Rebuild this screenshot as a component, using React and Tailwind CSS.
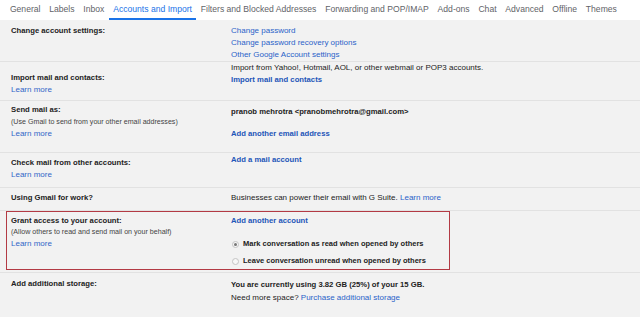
import React from 'react';

const tabs = [
  'General',
  'Labels',
  'Inbox',
  'Accounts and Import',
  'Filters and Blocked Addresses',
  'Forwarding and POP/IMAP',
  'Add-ons',
  'Chat',
  'Advanced',
  'Offline',
  'Themes',
];

const Label = ({ children }) => (
  <div className="text-[7.7px] leading-[12px] font-bold text-[#222]">{children}</div>
);

const Sub = ({ children }) => (
  <div className="text-[7.1px] leading-[11px] text-[#444]">{children}</div>
);

const LearnMore = () => (
  <div className="text-[8px] leading-[12px] text-[#3367c8]">Learn more</div>
);

const BoldLink = ({ children }) => (
  <div className="text-[7.7px] leading-[12px] font-bold text-[#1d55b8]">{children}</div>
);

const Radio = ({ checked, children }) => (
  <div className="flex items-center h-[12px]">
    <span className="ml-[1px] w-[7px] h-[7px] rounded-full border border-[#c4c4c4] bg-[#f7f7f7] flex items-center justify-center">
      {checked && <span className="w-[3px] h-[3px] rounded-full bg-[#777]" />}
    </span>
    <span className="ml-[4px] text-[7.5px] leading-[12px] font-bold text-[#222]">{children}</span>
  </div>
);

export default function App() {
  return (
    <div className="w-[640px] h-[317px] overflow-hidden bg-[#f2f2f2] font-['Liberation_Sans',Arial,sans-serif]">
      {/* Tabs */}
      <div className="h-[20px] bg-white flex pl-[5.5px]">
        {tabs.map((t) => (
          <div
            key={t}
            className={
              t === 'Accounts and Import'
                ? 'h-[20px] px-[4.4px] pt-[3px] text-[8.6px] leading-[12px] text-[#1a73e8] border-b-2 border-[#1a73e8]'
                : 'h-[20px] px-[4.4px] pt-[3px] text-[8.6px] leading-[12px] text-[#5f6368]'
            }
          >
            {t}
          </div>
        ))}
      </div>

      {/* Change account settings */}
      <div className="flex h-[41px]">
        <div className="w-[231px] pl-[11px] pt-[5px]">
          <Label>Change account settings:</Label>
        </div>
        <div className="flex-1 pt-[5px] text-[8px] leading-[11.5px] text-[#2a62c9]">
          <div className="leading-[12px]">Change password</div>
          <div>Change password recovery options</div>
          <div>Other Google Account settings</div>
        </div>
      </div>

      {/* Import mail and contacts */}
      <div className="flex h-[39px] border-t border-[#e2e2e2]">
        <div className="w-[231px] pl-[11px] pt-[10px]">
          <Label>Import mail and contacts:</Label>
          <LearnMore />
        </div>
        <div className="flex-1">
          <div className="text-[8px] leading-[9px] text-[#222] mt-[0.5px]">
            Import from Yahoo!, Hotmail, AOL, or other webmail or POP3 accounts.
          </div>
          <div className="mt-[2.5px]">
            <BoldLink>Import mail and contacts</BoldLink>
          </div>
        </div>
      </div>

      {/* Send mail as */}
      <div className="flex h-[52px] border-t border-[#e2e2e2]">
        <div className="w-[231px] pl-[11px] pt-[3px]">
          <Label>Send mail as:</Label>
          <div className="mt-[1px]">
            <Sub>(Use Gmail to send from your other email addresses)</Sub>
          </div>
          <LearnMore />
        </div>
        <div className="flex-1 pt-[5px]">
          <div className="text-[7.7px] leading-[12px] font-bold text-[#222]">
            pranob mehrotra &lt;pranobmehrotra@gmail.com&gt;
          </div>
          <div className="mt-[10px]">
            <BoldLink>Add another email address</BoldLink>
          </div>
        </div>
      </div>

      {/* Check mail */}
      <div className="flex h-[35px] border-t border-[#e2e2e2]">
        <div className="w-[231px] pl-[11px] pt-[4px]">
          <Label>Check mail from other accounts:</Label>
          <LearnMore />
        </div>
        <div className="flex-1 pt-[1px]">
          <BoldLink>Add a mail account</BoldLink>
        </div>
      </div>

      {/* Using Gmail for work */}
      <div className="flex h-[23px] border-t border-[#e2e2e2]">
        <div className="w-[231px] pl-[11px] pt-[4px]">
          <Label>Using Gmail for work?</Label>
        </div>
        <div className="flex-1 pt-[4px] text-[8px] leading-[12px] text-[#222]">
          Businesses can power their email with G Suite.{' '}
          <span className="text-[#2a62c9]">Learn more</span>
        </div>
      </div>

      {/* Grant access */}
      <div className="h-[62px] border-t border-[#e2e2e2]">
        <div className="ml-[6px] w-[444px] h-[59px] border border-[#b33a44] flex">
          <div className="w-[224px] pl-[4px] pt-[3px]">
            <Label>Grant access to your account:</Label>
            <Sub>(Allow others to read and send mail on your behalf)</Sub>
            <LearnMore />
          </div>
          <div className="flex-1 pt-[3px]">
            <BoldLink>Add another account</BoldLink>
            <div className="mt-[11px]">
              <Radio checked>Mark conversation as read when opened by others</Radio>
            </div>
            <div className="mt-[5px]">
              <Radio>Leave conversation unread when opened by others</Radio>
            </div>
          </div>
        </div>
      </div>

      {/* Storage */}
      <div className="flex h-[45px] border-t border-[#e2e2e2]">
        <div className="w-[231px] pl-[11px] pt-[5px]">
          <Label>Add additional storage:</Label>
        </div>
        <div className="flex-1 pt-[6px]">
          <div className="text-[7.7px] leading-[12px] font-bold text-[#222]">
            You are currently using 3.82 GB (25%) of your 15 GB.
          </div>
          <div className="mt-[1px] text-[8px] leading-[12px] text-[#222]">
            Need more space? <span className="text-[#2a62c9]">Purchase additional storage</span>
          </div>
        </div>
      </div>
    </div>
  );
}
